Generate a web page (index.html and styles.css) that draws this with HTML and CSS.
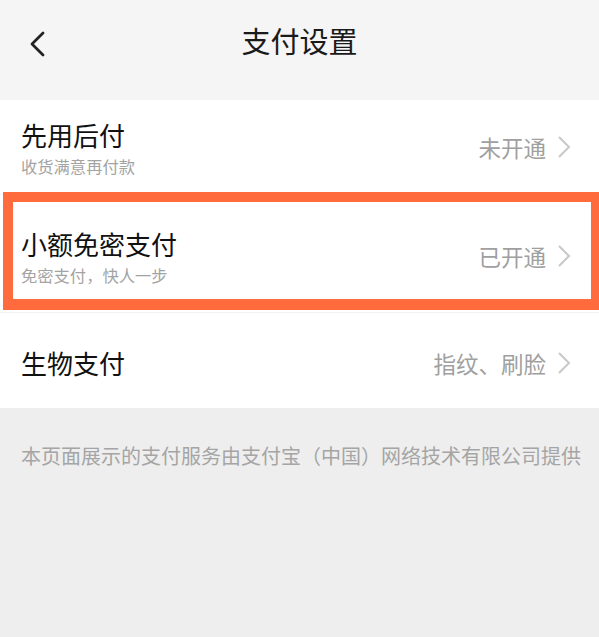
FILE: index.html
```html
<!DOCTYPE html>
<html lang="zh-CN">
<head>
    <meta charset="UTF-8">
    <meta name="viewport" content="width=device-width, initial-scale=1.0">
    <title>支付设置</title>
    <link rel="stylesheet" href="styles.css">
</head>

<body>
    <div class="page">
        <div class="nav-bar">
            <svg class="nav-back" width="20" height="28" viewBox="0 0 20 28">
                <path d="M15 3 L4 14 L15 25" fill="none" stroke="#222" stroke-width="2.8" stroke-linecap="round" stroke-linejoin="round"/>
            </svg>
            <div class="nav-title">支付设置</div>
        </div>

        <div class="setting-list">
            <div class="setting-item first">
                <div class="setting-item-text">
                    <div class="setting-item-title">先用后付</div>
                    <div class="setting-item-desc">收货满意再付款</div>
                </div>
                <div class="setting-item-value">未开通</div>
                <svg class="setting-item-arrow" width="16" height="24" viewBox="0 0 16 24">
                    <path d="M3 2 L13 12 L3 22" fill="none" stroke="#c8c8c8" stroke-width="2"/>
                </svg>
            </div>
            <div class="setting-item second">
                <div class="setting-item-text">
                    <div class="setting-item-title">小额免密支付</div>
                    <div class="setting-item-desc">免密支付，快人一步</div>
                </div>
                <div class="setting-item-value">已开通</div>
                <svg class="setting-item-arrow" width="16" height="24" viewBox="0 0 16 24">
                    <path d="M3 2 L13 12 L3 22" fill="none" stroke="#c8c8c8" stroke-width="2"/>
                </svg>
                <div class="highlight-box"></div>
            </div>
            <div class="setting-item third">
                <div class="setting-item-text">
                    <div class="setting-item-title">生物支付</div>
                </div>
                <div class="setting-item-value">指纹、刷脸</div>
                <svg class="setting-item-arrow" width="16" height="24" viewBox="0 0 16 24">
                    <path d="M3 2 L13 12 L3 22" fill="none" stroke="#c8c8c8" stroke-width="2"/>
                </svg>
            </div>
        </div>

        <div class="page-footer">本页面展示的支付服务由支付宝（中国）网络技术有限公司提供</div>
    </div>
</body>
</html>
```

FILE: styles.css
```css
* {
  box-sizing: border-box;
}

body {
  margin: 0;
  font-family: "Noto Sans CJK SC", "Noto Sans", sans-serif;
  background-color: #eeeeee;
}

.page {
  width: 599px;
  min-height: 637px;
  background-color: #eeeeee;
}

.nav-bar {
  position: relative;
  height: 100px;
  background-color: #f5f5f5;
  display: flex;
  justify-content: center;
  padding-top: 20px;
}

.nav-back {
  position: absolute;
  left: 28px;
  top: 30px;
}

.nav-title {
  font-size: 29px;
  line-height: 40px;
  color: #1a1a1a;
}

.setting-list {
  background-color: #ffffff;
}

.setting-item {
  position: relative;
  display: flex;
  align-items: center;
  padding: 0 27px 0 21px;
  border-bottom: 1px solid #f2f2f2;
}

.setting-item.first {
  height: 95px;
}

.setting-item.second {
  height: 118px;
  padding-top: 4px;
}

.setting-item.third {
  height: 95px;
  padding-top: 5px;
  border-bottom: none;
}

.setting-item-text {
  flex: 1;
}

.setting-item-title {
  font-size: 26px;
  line-height: 34px;
  color: #111111;
}

.setting-item-desc {
  margin-top: 4px;
  font-size: 16.3px;
  line-height: 20px;
  color: #a3a3a3;
}

.setting-item-value {
  font-size: 22.5px;
  color: #a0a0a0;
  margin-right: 10px;
}

.highlight-box {
  position: absolute;
  left: 3px;
  right: -2px;
  top: -3px;
  bottom: 2px;
  border: 10px solid #ff6b3d;
  border-bottom-width: 11px;
  pointer-events: none;
}

.page-footer {
  padding: 33px 0 0 21px;
  font-size: 20px;
  line-height: 30px;
  color: #a5a5a5;
  white-space: nowrap;
}
```
